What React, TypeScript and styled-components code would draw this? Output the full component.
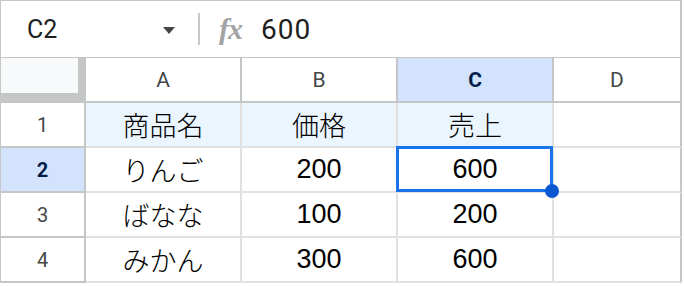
import React from "react";
import styled, { createGlobalStyle, css } from "styled-components";

const GlobalStyle = createGlobalStyle`
  html, body { margin: 0; padding: 0; background: #ffffff; }
  * { box-sizing: border-box; }
`;

const HEADER_LINE = "#c4c7c5";
const GRID_LINE = "#e1e1e1";
const SELECT_BG = "#d3e3fd";
const SELECT_TEXT = "#041e49";

const Sheet = styled.div`
  width: 682px;
  border-top: 1px solid ${HEADER_LINE};
  border-left: 1px solid ${HEADER_LINE};
  font-family: "Liberation Sans", "Noto Sans CJK JP", sans-serif;
`;

const FormulaBar = styled.div`
  display: flex;
  align-items: center;
  height: 57px;
  border-right: 2px solid ${HEADER_LINE};
  border-bottom: 1px solid ${HEADER_LINE};
`;

const NameBox = styled.div`
  width: 197px;
  display: flex;
  align-items: center;
  justify-content: space-between;
  padding: 0 23px 0 26px;
  font-family: Roboto, "Liberation Sans", sans-serif;
  font-size: 25px;
  color: #1f1f1f;
`;

const Caret = styled.span`
  width: 0;
  height: 0;
  border-left: 6.5px solid transparent;
  border-right: 6.5px solid transparent;
  border-top: 7px solid #444746;
  margin-top: 2px;
`;

const Divider = styled.span`
  width: 2px;
  height: 32px;
  background: #c7c7c7;
`;

const FxIcon = styled.span`
  margin-left: 19px;
  font-family: "Liberation Serif", serif;
  font-style: italic;
  font-weight: 700;
  font-size: 30px;
  color: #a3a3a3;
  letter-spacing: -1px;
  line-height: 1;
`;

const FormulaValue = styled.span`
  margin-left: 19px;
  font-family: Roboto, "Liberation Sans", sans-serif;
  font-size: 28px;
  letter-spacing: 1px;
  color: #1f1f1f;
`;

const Grid = styled.div`
  display: grid;
  grid-template-columns: 85px 156px 156px 156px 128px;
  grid-auto-rows: 45px;
`;

const Corner = styled.div`
  background: #f8f9fa;
  border-right: 8px solid ${HEADER_LINE};
  border-bottom: 10px solid ${HEADER_LINE};
`;

const headerBase = css`
  display: flex;
  align-items: center;
  justify-content: center;
  font-family: Roboto, "Liberation Sans", sans-serif;
  color: #444746;
  background: #ffffff;
  border-right: 2px solid ${HEADER_LINE};
  border-bottom: 2px solid ${HEADER_LINE};
`;

const selectedHeader = css`
  background: ${SELECT_BG};
  color: ${SELECT_TEXT};
  font-weight: 700;
`;

const ColHeader = styled.div<{ $selected?: boolean }>`
  ${headerBase}
  font-size: 21px;
  ${(p) => p.$selected && selectedHeader}
`;

const RowHeader = styled.div<{ $selected?: boolean }>`
  ${headerBase}
  font-size: 20px;
  ${(p) => p.$selected && selectedHeader}
`;

const Cell = styled.div<{ $tinted?: boolean; $last?: boolean; $active?: boolean }>`
  position: ${(p) => (p.$active ? "relative" : "static")};
  display: flex;
  align-items: center;
  justify-content: center;
  font-size: 27px;
  font-weight: 400;
  color: #000000;
  background: ${(p) => (p.$tinted ? "#eaf5fd" : "#ffffff")};
  border-right: 2px solid ${(p) => (p.$last ? HEADER_LINE : GRID_LINE)};
  border-bottom: 2px solid ${GRID_LINE};
`;

const JpText = styled.span`
  font-family: "Noto Sans CJK JP", sans-serif;
  font-weight: 300;
`;

const SelectionBox = styled.div`
  position: absolute;
  left: -2px;
  top: -2px;
  width: 157px;
  height: 46px;
  border: 3px solid #1a73e8;
  pointer-events: none;
  z-index: 2;
`;

const FillHandle = styled.div`
  position: absolute;
  left: 147px;
  top: 36px;
  width: 14px;
  height: 14px;
  border-radius: 50%;
  background: #0b57d0;
  z-index: 3;
`;

const columns = ["A", "B", "C", "D"];
const rows = [
  ["商品名", "価格", "売上", ""],
  ["りんご", "200", "600", ""],
  ["ばなな", "100", "200", ""],
  ["みかん", "300", "600", ""],
];

const isJapanese = (s: string) => /[^\x00-\x7f]/.test(s);

export default function App() {
  return (
    <>
      <GlobalStyle />
      <Sheet>
        <FormulaBar>
          <NameBox>
            <span>C2</span>
            <Caret />
          </NameBox>
          <Divider />
          <FxIcon>fx</FxIcon>
          <FormulaValue>600</FormulaValue>
        </FormulaBar>
        <Grid>
          <Corner />
          {columns.map((c) => (
            <ColHeader key={c} $selected={c === "C"}>
              {c}
            </ColHeader>
          ))}
          {rows.map((r, ri) => (
            <React.Fragment key={ri}>
              <RowHeader $selected={ri === 1}>{ri + 1}</RowHeader>
              {r.map((v, ci) => {
                const active = ri === 1 && ci === 2;
                return (
                  <Cell
                    key={ci}
                    $tinted={ri === 0 && ci < 3}
                    $last={ci === 3}
                    $active={active}
                  >
                    {isJapanese(v) ? <JpText>{v}</JpText> : v}
                    {active && (
                      <>
                        <SelectionBox />
                        <FillHandle />
                      </>
                    )}
                  </Cell>
                );
              })}
            </React.Fragment>
          ))}
        </Grid>
      </Sheet>
    </>
  );
}
